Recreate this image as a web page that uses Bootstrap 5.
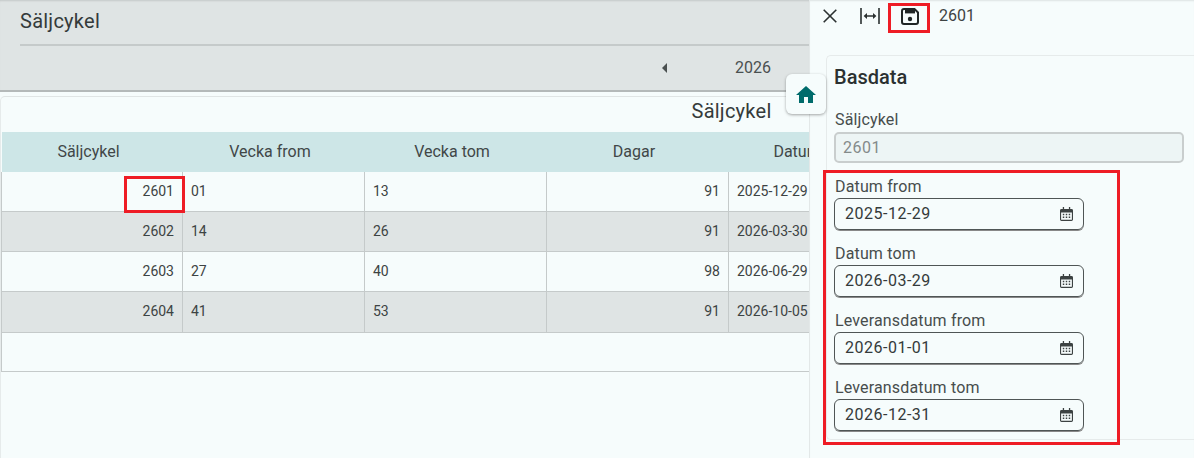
<!DOCTYPE html>
<html lang="sv">
<head>
<meta charset="utf-8">
<title>Säljcykel</title>
<link href="https://cdn.jsdelivr.net/npm/bootstrap@5.3.0/dist/css/bootstrap.min.css" rel="stylesheet">
<style>
html,body{height:100%;}
body{width:1194px;height:458px;overflow:hidden;background:#f6fcfc;font-family:Roboto,"Liberation Sans",sans-serif;color:#343a3a;font-size:16px;font-weight:400;}
.shell{width:1194px;height:458px;position:relative;overflow:hidden;}
.mainpane{width:809px;flex:none;overflow:hidden;}
.headband{height:92px;background:#dfe4e4;border-bottom:2px solid #b4b9b9;padding:0 0 0 20px;box-shadow:inset 0 2px 2px -1px rgba(0,0,0,.12);}
.headtitle{height:46px;border-bottom:2px solid #c5caca;font-size:20px;line-height:43px;letter-spacing:.25px;}
.yearrow{height:44px;}
.yearnav{padding-left:642px;height:100%;color:#4a5050;}
.tri{width:0;height:0;border-top:5px solid transparent;border-bottom:5px solid transparent;border-right:5px solid #4a5050;}
.yearval{margin-left:68px;}
.sheet{width:1462px;height:366px;margin-top:4px;border-top:1px solid #e0e5e5;border-left:1px solid #e6ebeb;border-radius:5px 0 0 0;}
.sheettitle{height:35px;line-height:29px;font-size:20px;text-align:center;letter-spacing:.25px;}
.sheetgrid{width:909px;margin:0;table-layout:fixed;border-collapse:collapse;font-size:14px;color:#3d4343;}
.sheetgrid th{width:182px;height:40px;background:#cde6e7;font-weight:400;font-size:16px;text-align:center;vertical-align:middle;color:#414747;padding:0 7px 0 0;border:0;white-space:nowrap;}
.sheetgrid th:first-child{width:181px;}
.sheetgrid td{height:40px;padding:0 8px;vertical-align:middle;border:1px solid #c5caca;background:#f6fcfc;}
.sheetgrid tbody tr:first-child td{height:39px;border-top:0;}
.sheetgrid tbody tr:last-child td{height:41px;}
.sheetgrid tr.altrow td{background:#dfe4e4;}
.sheetgrid td.num{text-align:right;}
.sheetfill{width:909px;height:39px;border-left:1px solid #c5caca;border-bottom:1px solid #c5caca;}
.sidepane{width:385px;flex:none;border-left:1px solid #e3e8e8;box-shadow:inset 0 2px 2px -1px rgba(0,0,0,.1);}
.sidetop{height:32px;padding-left:13px;}
.sidetop svg{display:block;flex:none;}
.gapwide{margin-left:23px;}
.gapsave{margin-left:21px;}
.sidenum{margin-left:20px;line-height:30px;color:#3d4343;}
.basebox{margin:23px 0 0 16px;height:385px;padding:8px 0 0 8px;border:1px solid #e6ebeb;border-right:0;border-radius:5px 0 0 5px;}
.basehead{font-size:20px;font-weight:500;line-height:26px;margin-bottom:20px;margin-left:-1px;color:#2b3131;}
.fldlabel{line-height:20px;font-size:16px;color:#474d4d;margin:0;display:block;letter-spacing:.15px;}
.lockedfield.form-control{width:350px;height:31px;margin:2px 0 14px -1px;padding:0 7px;border:2px solid #c9cece;border-radius:5px;background:#edf5f5;color:#848a8a;font-size:16px;letter-spacing:.5px;opacity:1;}
.datewrap{width:250px;margin:1px 0 14px -1px;}
.datewrap .form-control{height:32px;padding:0 10px 2px;border:1px solid #4f5555;border-radius:6px;background:transparent;color:#343a3a;font-size:16px;letter-spacing:.5px;box-shadow:0 1px 0 #888;}
.datewrap svg{position:absolute;right:11px;top:9px;}
.homebtn{position:absolute;left:786px;top:74px;width:40px;height:40px;background:#f6fcfc;border-radius:6px;box-shadow:0 1px 3px rgba(0,0,0,.35);z-index:3;}
.markbox{position:absolute;border:3px solid #ee1c25;z-index:4;pointer-events:none;}
.markcell{left:124px;top:176px;width:61px;height:37px;}
.marksave{left:888px;top:3px;width:42px;height:30px;}
.markdates{left:823px;top:170px;width:297px;height:275px;}
</style>
</head>
<body>
<div class="shell d-flex">
  <div class="mainpane">
    <div class="headband">
      <div class="headtitle">Säljcykel</div>
      <div class="yearrow"><div class="yearnav d-flex align-items-center"><span class="tri"></span><span class="yearval">2026</span></div></div>
    </div>
    <div class="sheet">
      <div class="sheettitle">Säljcykel</div>
      <table class="table sheetgrid">
        <thead><tr><th>Säljcykel</th><th>Vecka from</th><th>Vecka tom</th><th>Dagar</th><th>Datum from</th></tr></thead>
        <tbody>
          <tr><td class="num">2601</td><td>01</td><td>13</td><td class="num">91</td><td>2025-12-29</td></tr>
          <tr class="altrow"><td class="num">2602</td><td>14</td><td>26</td><td class="num">91</td><td>2026-03-30</td></tr>
          <tr><td class="num">2603</td><td>27</td><td>40</td><td class="num">98</td><td>2026-06-29</td></tr>
          <tr class="altrow"><td class="num">2604</td><td>41</td><td>53</td><td class="num">91</td><td>2026-10-05</td></tr>
        </tbody>
      </table>
      <div class="sheetfill"></div>
    </div>
  </div>
  <div class="sidepane">
    <div class="sidetop d-flex align-items-center">
      <svg width="14" height="14" viewBox="0 0 14 14" fill="none" stroke="#2b3131" stroke-width="1.6"><path d="M.7.7 13.3 13.3M13.3.7.7 13.3"/></svg>
      <svg class="gapwide" width="20" height="16" viewBox="0 0 20 16"><path fill="none" stroke="#2b3131" stroke-width="1.6" d="M1 0V16M19 0V16M6 8H14"/><path fill="#2b3131" d="M3.6 8 7 5v6zM16.4 8 13 5v6z"/></svg>
      <svg class="gapsave" width="18" height="17" viewBox="0 0 18 17"><path fill="none" stroke="#1f2525" stroke-width="2" d="M3 1h10.5L17 4.5V14a2 2 0 0 1-2 2H3a2 2 0 0 1-2-2V3a2 2 0 0 1 2-2z"/><rect x="4" y="2" width="10" height="3.4" fill="#1f2525"/><circle cx="9" cy="11" r="2.2" fill="#1f2525"/></svg>
      <span class="sidenum">2601</span>
    </div>
    <div class="basebox">
      <div class="basehead">Basdata</div>
      <label class="fldlabel" for="f0">Säljcykel</label>
      <input id="f0" class="form-control lockedfield" value="2601" disabled>

      <label class="fldlabel" for="f1">Datum from</label>
      <div class="datewrap position-relative"><input id="f1" class="form-control" value="2025-12-29"><svg width="13" height="14" viewBox="0 0 14 15"><use href="#cal"/></svg></div>

      <label class="fldlabel" for="f2">Datum tom</label>
      <div class="datewrap position-relative"><input id="f2" class="form-control" value="2026-03-29"><svg width="13" height="14" viewBox="0 0 14 15"><use href="#cal"/></svg></div>

      <label class="fldlabel" for="f3">Leveransdatum from</label>
      <div class="datewrap position-relative"><input id="f3" class="form-control" value="2026-01-01"><svg width="13" height="14" viewBox="0 0 14 15"><use href="#cal"/></svg></div>

      <label class="fldlabel" for="f4">Leveransdatum tom</label>
      <div class="datewrap position-relative"><input id="f4" class="form-control" value="2026-12-31"><svg width="13" height="14" viewBox="0 0 14 15"><use href="#cal"/></svg></div>
    </div>
  </div>

  <div class="homebtn d-flex align-items-center justify-content-center">
    <svg width="20" height="17" viewBox="0 0 20 17"><path fill="#006b6b" d="M10 0 0 9h3v8h5v-6h4v6h5V9h3z"/></svg>
  </div>
  <div class="markbox markcell"></div>
  <div class="markbox marksave"></div>
  <div class="markbox markdates"></div>
</div>
<svg width="0" height="0" class="position-absolute"><defs><g id="cal"><path fill="#3c4242" d="M3 0h1.4v2H9.6V0H11v2h1.4A1.6 1.6 0 0 1 14 3.6v9.8a1.6 1.6 0 0 1-1.6 1.6H1.6A1.6 1.6 0 0 1 0 13.4V3.6A1.6 1.6 0 0 1 1.6 2H3zM1.2 6v7.4c0 .3.1.4.4.4h10.8c.3 0 .4-.1.4-.4V6z"/><path fill="#3c4242" d="M3 7.3h1.6v1.5H3zM6.2 7.3h1.6v1.5H6.2zM9.4 7.3H11v1.5H9.4zM3 10.3h1.6v1.5H3zM6.2 10.3h1.6v1.5H6.2zM9.4 10.3H11v1.5H9.4z"/></g></defs></svg>
<script src="https://cdn.jsdelivr.net/npm/bootstrap@5.3.0/dist/js/bootstrap.bundle.min.js"></script>
</body>
</html>
